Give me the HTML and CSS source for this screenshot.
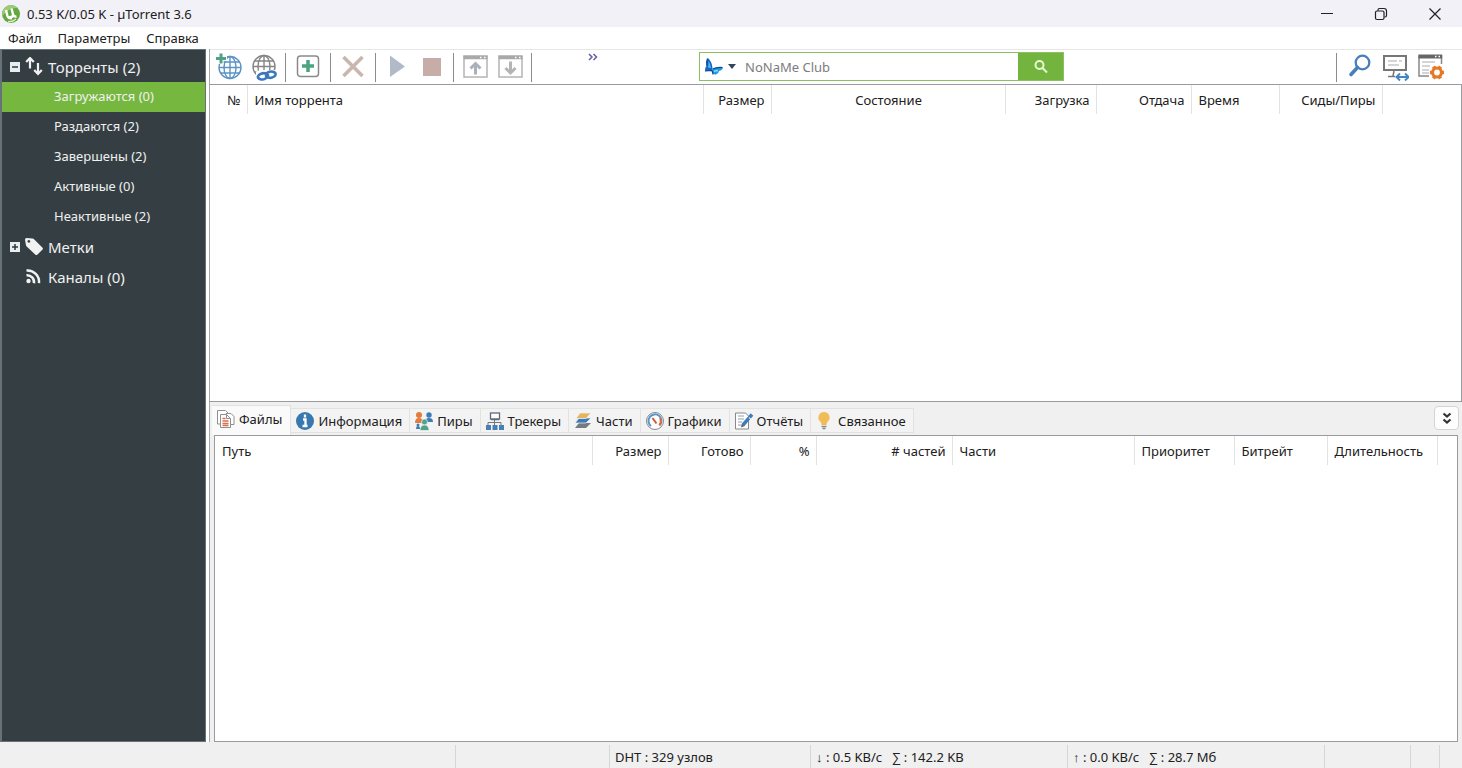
FILE: index.html
```
<!DOCTYPE html>
<html lang="ru">
<head>
<meta charset="utf-8">
<title>0.53 K/0.05 K - µTorrent 3.6</title>
<link rel="stylesheet" href="styles.css">
</head>
<body>
<header class="titlebar">
  <svg class="app-logo" viewBox="0 0 20 20" width="20" height="20"><circle cx="10" cy="10" r="9" fill="#62a83c"/><path d="M1.500 12A9 9 0 0 1 17 4q-9-1-15.500 8z" fill="#9ccb78"/><path d="M5 6l1.300 5.500q1 3.500 4.700 2.700M10.500 4.500l1.700 6.500q.8 2 3.300 1.300M7 12.800q4 1.500 5.300-1.800" fill="none" stroke="#fff" stroke-width="2.400"/><path d="M7 17.500q5 .5 8-2.500" fill="none" stroke="#d9efc8" stroke-width="1.300"/></svg>
  <h1 class="title">0.53 K/0.05 K - µTorrent 3.6</h1>
  <div class="window-buttons">
    <button class="window-button" aria-label="Свернуть"><svg viewBox="0 0 14 14" width="14" height="14"><path d="M1 6.500h12" stroke="#222"/></svg></button>
    <button class="window-button" aria-label="Восстановить"><svg viewBox="0 0 14 14" width="14" height="14" fill="none" stroke="#222" stroke-width="1.200"><rect x="1.500" y="4" width="8.500" height="8.500" rx="1.500"/><path d="M4 3.700V3q0-1.500 1.500-1.500H10Q12.500 1.500 12.500 4v4.500q0 1.500-1.500 1.500h-.5"/></svg></button>
    <button class="window-button" aria-label="Закрыть"><svg viewBox="0 0 14 14" width="14" height="14"><path d="M1.500 1.500l11 11M12.500 1.500l-11 11" stroke="#222" stroke-width="1.200"/></svg></button>
  </div>
</header>
<nav class="menubar">
  <button class="menu-item">Файл</button>
  <button class="menu-item">Параметры</button>
  <button class="menu-item">Справка</button>
</nav>
<div class="workspace">
  <nav class="sidebar">
    <div class="branch">
      <button class="expander" aria-label="Свернуть ветку"><svg viewBox="0 0 10 10" width="10" height="10"><rect width="10" height="10" fill="#e8edf0"/><path d="M2 5h6" stroke="#2c3a44" stroke-width="1.500"/></svg></button>
      <a class="branch-link" href="#torrents"><svg viewBox="0 0 18 20" width="18" height="20" fill="none" stroke="#f2f2f2" stroke-width="2.200"><path d="M5 11.500V2M1.200 5L5 1l3.800 4M13 6v10M9.200 13l3.800 4 3.800-4"/></svg>Торренты (2)</a>
    </div>
    <a class="leaf leaf-active" href="#downloading">Загружаются (0)</a>
    <a class="leaf" href="#seeding">Раздаются (2)</a>
    <a class="leaf" href="#completed">Завершены (2)</a>
    <a class="leaf" href="#active">Активные (0)</a>
    <a class="leaf" href="#inactive">Неактивные (2)</a>
    <div class="branch">
      <button class="expander" aria-label="Развернуть ветку"><svg viewBox="0 0 10 10" width="10" height="10"><rect width="10" height="10" fill="#e8edf0"/><path d="M2 5h6M5 2v6" stroke="#2c3a44" stroke-width="1.500"/></svg></button>
      <a class="branch-link" href="#labels"><svg viewBox="0 0 18 20" width="18" height="20"><path fill-rule="evenodd" d="M0 2.500Q0 1 1.500 1l6 .5q1 .1 1.800 1l8 8q1.200 1.200 0 2.300l-4.800 4.700q-1.200 1-2.300 0l-8.500-8q-.7-.7-.8-1.700zM3.800 3a1.400 1.400 0 1 0 .1 0z" fill="#f2f2f2"/></svg>Метки</a>
    </div>
    <div class="branch">
      <span class="expander"></span>
      <a class="branch-link" href="#feeds"><svg viewBox="0 0 18 20" width="18" height="20" fill="none" stroke="#f2f2f2" stroke-width="2.500"><circle cx="3.500" cy="14" r="2.200" fill="#f2f2f2" stroke="none"/><path d="M1.500 8.200a7 7 0 0 1 7.500 8M1.500 3.500a11.500 11.500 0 0 1 12.500 12.700"/></svg>Каналы (0)</a>
    </div>
  </nav>
  <main class="content">
    <div class="toolbar">
      <div class="tools">
        <button class="tool" aria-label="Добавить торрент"><svg viewBox="0 0 28 28" width="28" height="28" fill="none"><g stroke="#5b93c6" stroke-width="1.400"><circle cx="15" cy="14.500" r="11"/><ellipse cx="15" cy="14.500" rx="6" ry="11"/><path d="M15 4v21M4 14.500h22M6 9h18M6 20h18"/></g><path d="M6 0v11M0 5.500h12" stroke="#fff" stroke-width="5"/><path d="M6 .5v10M1 5.500h10" stroke="#53a184" stroke-width="3"/></svg></button>
        <button class="tool" aria-label="Добавить по ссылке"><svg viewBox="0 0 28 28" width="28" height="28" fill="none"><g stroke="#858585" stroke-width="1.400"><circle cx="14" cy="13.500" r="11"/><ellipse cx="14" cy="13.500" rx="6" ry="11"/><path d="M14 3v22M3 13.500h22M5 8h18M5 19h8"/></g><path d="M6 18.500l4-1.500h17v11H6z" fill="#fff"/><g stroke="#3978bd" stroke-width="2.600" stroke-linecap="round"><path d="M18 24l-2.500 1.500q-2.500 1.500-5 .8-3-1-2.500-3 .5-1.500 3-2.500 3-1.300 5.500 0l1.500 1.200"/><path d="M16 20.500l2-1.200q2.500-1.300 5-.5 3 1 2.500 3-.5 1.700-3 2.600-2.500 1-4.500 0l-2-1.500"/></g></svg></button>
        <span class="divider"></span>
        <button class="tool tool-wide" aria-label="Создать торрент"><svg viewBox="0 0 28 28" width="28" height="28" fill="none"><rect x="3.500" y="3" width="21" height="20.500" rx="3" stroke="#8a8a8a" stroke-width="1.500"/><path d="M14 7v12M8 13h12" stroke="#4aa47f" stroke-width="3.500"/></svg></button>
        <span class="divider"></span>
        <button class="tool tool-wide" aria-label="Удалить"><svg viewBox="0 0 28 28" width="28" height="28"><path d="M4.500 4l19 19M23.500 4l-19 19" stroke="#c9b6ae" stroke-width="3.600"/></svg></button>
        <span class="divider"></span>
        <button class="tool" aria-label="Запустить"><svg viewBox="0 0 28 28" width="28" height="28"><path d="M7 2.500l15 11L7 24z" fill="#b2bac8"/></svg></button>
        <button class="tool" aria-label="Остановить"><svg viewBox="0 0 28 28" width="28" height="28"><rect x="5" y="5" width="18" height="18" fill="#c8aca8"/></svg></button>
        <span class="divider"></span>
        <button class="tool" aria-label="Выше в очереди"><svg viewBox="0 0 28 28" width="28" height="28"><rect x="3" y="3" width="23" height="21" fill="none" stroke="#b4b4b4" stroke-width="1.500"/><path d="M2.500 4.500h24" stroke="#a9a9a9" stroke-width="3.500"/><path d="M19 4.500h1.500M23 4.500h1.500" stroke="#fff" stroke-width="1.500"/><path d="M14.500 21.500V11M9.500 15.500l5-5 5 5" fill="none" stroke="#aab1bb" stroke-width="3"/></svg></button>
        <button class="tool" aria-label="Ниже в очереди"><svg viewBox="0 0 28 28" width="28" height="28"><rect x="3" y="3" width="23" height="21" fill="none" stroke="#b4b4b4" stroke-width="1.500"/><path d="M2.500 4.500h24" stroke="#a9a9a9" stroke-width="3.500"/><path d="M19 4.500h1.500M23 4.500h1.500" stroke="#fff" stroke-width="1.500"/><path d="M14.500 8.500v11M9.500 15l5 5 5-5" fill="none" stroke="#b4b4b4" stroke-width="3"/></svg></button>
        <span class="divider"></span>
      </div>
      <button class="overflow" aria-label="Ещё"><svg viewBox="0 0 10 8" width="10" height="8"><path d="M1 1l3 3-3 3M5.500 1l3 3-3 3" fill="none" stroke="#6060a4" stroke-width="1.500"/></svg></button>
      <form class="search">
        <button class="engine" type="button" aria-label="Поисковая система"><svg viewBox="0 0 20 20" width="20" height="20"><path d="M4 1q4 4 4.500 10l-1 2.500L1 14q-.5-3 1.500-5Q1.500 5 4 1z" fill="#1668c8"/><path d="M4.500 4q2 3 2.500 7l-3-.5q.8-3 .5-6.500z" fill="#4fc0f2"/><path d="M7.500 13q2.500-3 11.500-2.500-.5 2.500-4 3.500-.5 3-3 3.500-3 .5-3.500-2z" fill="#1b9be0"/><path d="M3.500 1.500Q2 5 3 9M8.500 12q4-2 10-1.500M1 14l7-.7M8 13.500l1.200 4" fill="none" stroke="#0b4499" stroke-width="1.200"/><path d="M10 14.500q2-1 4-1" stroke="#7fdcf8" stroke-width="1.500" fill="none"/></svg><svg viewBox="0 0 8 5" width="8" height="5"><path d="M0 0h8L4 5z" fill="#34455c"/></svg></button>
        <input class="search-input" type="text" placeholder="NoNaMe Club" aria-label="Поиск">
        <button class="search-go" type="button" aria-label="Найти"><svg viewBox="0 0 16 16" width="16" height="16" fill="none" stroke="#e6fad4" stroke-width="2"><circle cx="6.500" cy="6" r="4"/><path d="M9.500 9L14 13.500"/></svg></button>
      </form>
      <div class="tools tools-right">
        <span class="divider"></span>
        <button class="tool" aria-label="Поиск торрентов"><svg viewBox="0 0 28 28" width="28" height="28" fill="none" stroke="#477fbd"><circle cx="17.500" cy="9.500" r="6.800" stroke-width="2.300"/><path d="M12.500 14.500L6 21.500" stroke-width="3.600" stroke-linecap="round"/></svg></button>
        <button class="tool" aria-label="Удалённый доступ"><svg viewBox="0 0 28 28" width="28" height="28" fill="none"><rect x="3" y="3" width="22" height="14" stroke="#777" stroke-width="2"/><path d="M7 8h9M18 8h3M7 12h11" stroke="#aaa"/><path d="M13 18l-1 5M7 23.500h7" stroke="#777" stroke-width="1.500"/><path d="M16 24h11M19 20.500L15.500 24l3.500 3.500M24 20.500l3.500 3.500-3.500 3.500" stroke="#4685c4" stroke-width="2"/></svg></button>
        <button class="tool" aria-label="Настройки"><svg viewBox="0 0 28 28" width="28" height="28" fill="none"><path d="M24.500 11V3H2v20h10" stroke="#888" stroke-width="1.500"/><path d="M1.500 3.500h23.700" stroke="#666" stroke-width="4"/><path d="M18 3.500h1.500M21.500 3.500H23" stroke="#fff" stroke-width="1.500"/><path d="M5 9h13M5 13h8M5 17h7M5 20h7" stroke="#aaa"/><circle cx="20" cy="19.500" r="4.400" stroke="#e67824" stroke-width="3"/><path d="M13 19.500h2M25 19.500h2M16.500 13.500l1 1.700M22.500 23.800l1 1.700M16.500 25.500l1-1.700M22.500 15.200l1-1.700" stroke="#e67824" stroke-width="3.600"/></svg></button>
      </div>
    </div>
    <section class="torrents">
      <table class="grid">
        <colgroup><col class="w-37"><col class="w-456"><col class="w-68"><col class="w-234"><col class="w-91"><col class="w-95"><col class="w-88"><col class="w-103"><col></colgroup>
        <thead><tr><th class="right">№</th><th>Имя торрента</th><th class="right">Размер</th><th class="center">Состояние</th><th class="right">Загрузка</th><th class="right">Отдача</th><th>Время</th><th class="right">Сиды/Пиры</th><td></td></tr></thead>
      </table>
    </section>
    <div class="tabbar">
      <div class="tabs" role="tablist">
        <button class="tab tab-active" role="tab" aria-selected="true"><svg viewBox="0 0 20 20" width="20" height="20" fill="#fff" stroke="#909090"><path d="M1.500 15V1.500h8L12 4v11z"/><path d="M10 4.500h5l3 3v8h-8z"/><path d="M4.500 18.500v-13h6l4 4v9z"/><path d="M10.500 5.500v4h4" fill="none"/><path d="M6.500 9.500h3M6.500 12h6M6.500 14.500h6M6.500 16.500h6" stroke="#df6c4b" stroke-width="1.400"/></svg>Файлы</button>
        <button class="tab" role="tab"><svg viewBox="0 0 20 20" width="20" height="20"><circle cx="10" cy="10" r="9" fill="#3978ae"/><path d="M10 3.500v3M8 8.500h2.500v6M7.500 15h5" fill="none" stroke="#fff" stroke-width="2.300"/></svg>Информация</button>
        <button class="tab" role="tab"><svg viewBox="0 0 20 20" width="20" height="20"><g fill="#e37b3e"><circle cx="5" cy="4" r="3"/><path d="M1 12q0-5 4-5t4 5z"/></g><g fill="#3e7cb4"><circle cx="15" cy="4" r="2.700"/><path d="M11 11q0-4 4-4t4 4z"/></g><g fill="#4fa28b" stroke="#f2f2f2" stroke-width=".7"><circle cx="10.500" cy="11" r="3"/><path d="M6 19.500Q6 14 10.500 14t4.500 5.500z"/></g><g fill="#3e7cb4"><circle cx="4" cy="14" r="1.500"/><path d="M2 18q0-3 2-3t2 3z"/></g></svg>Пиры</button>
        <button class="tab" role="tab"><svg viewBox="0 0 20 20" width="20" height="20" fill="none"><path d="M9.500 8v4M3 15v-3.500h13V15M9.500 11v4" stroke="#777"/><rect x="5.500" y="2" width="9" height="6" fill="#fff" stroke="#5e6c7a" stroke-width="1.300"/><path d="M6 8.500h8" stroke="#5e6c7a" stroke-width="1.500"/><path d="M1 14h5v5H1zM7.500 14h5v5h-5zM14 14h5v5h-5z" fill="#4780b4"/></svg>Трекеры</button>
        <button class="tab" role="tab"><svg viewBox="0 0 20 20" width="20" height="20"><path d="M2 17l4-5h12l-5 5z" fill="#747b80"/><path d="M2 12l4-5h12l-5 5z" fill="#397bbd" stroke="#f2f2f2" stroke-width=".7"/><path d="M3 7.500L7 2h11l-5 5.500z" fill="#e8b35c" stroke="#f2f2f2" stroke-width=".7"/></svg>Части</button>
        <button class="tab" role="tab"><svg viewBox="0 0 20 20" width="20" height="20" fill="none"><circle cx="10" cy="10" r="8.500" fill="#fff" stroke="#888"/><path d="M6 15a6.500 6.500 0 1 1 9-1" stroke="#5b96c9" stroke-width="2"/><path d="M15.300 7q1.500 4-1 7.500" stroke="#e2683c" stroke-width="2"/><path d="M7.500 7l4 5.500" stroke="#cf5a3c" stroke-width="2"/></svg>Графики</button>
        <button class="tab" role="tab"><svg viewBox="0 0 20 20" width="20" height="20" fill="none"><path d="M1.500 2h10l3 3v13h-13z" fill="#fff" stroke="#888"/><path d="M4 5h6M4 8h6M4 11h4M4 14h4" stroke="#8aa1b1"/><path d="M9 14L18 3.500" stroke="#3b7dbd" stroke-width="3.500" stroke-dasharray="9 1 5"/><path d="M7 16.500l1-3.500 2.500 2z" fill="#555"/></svg>Отчёты</button>
        <button class="tab" role="tab"><svg viewBox="0 0 20 20" width="20" height="20"><path d="M9 1a5.500 5.500 0 0 0-3.500 9.800Q6.500 12 6.500 14h5q0-2 1-3.200A5.500 5.500 0 0 0 9 1z" fill="#f0bc55"/><path d="M6.500 15.500h5M7.500 17.500h3" stroke="#8c8c8c" stroke-width="1.300"/></svg>Связанное</button>
      </div>
      <button class="collapse" aria-label="Скрыть панель"><svg viewBox="0 0 10 14" width="10" height="14" fill="none" stroke="#333" stroke-width="2.200"><path d="M1.500 2.500L5 5.500l3.500-3M1.500 8.500L5 11.500l3.500-3"/></svg></button>
    </div>
    <section class="details">
      <table class="grid">
        <colgroup><col class="w-377"><col class="w-76"><col class="w-82"><col class="w-66"><col class="w-136"><col class="w-182"><col class="w-100"><col class="w-93"><col class="w-110"><col></colgroup>
        <thead><tr><th>Путь</th><th class="right">Размер</th><th class="right">Готово</th><th class="right">%</th><th class="right"># частей</th><th>Части</th><th>Приоритет</th><th>Битрейт</th><th>Длительность</th><td></td></tr></thead>
      </table>
    </section>
  </main>
</div>
<footer class="statusbar">
  <span class="status status-fill"></span>
  <span class="status status-note"></span>
  <span class="status status-dht">DHT : 329 узлов</span>
  <span class="status status-rate"><span>↓ : 0.5 KB/с</span><span>∑ : 142.2 KB</span></span>
  <span class="status status-rate"><span>↑ : 0.0 KB/с</span><span>∑ : 28.7 Мб</span></span>
  <span class="status status-extra"></span>
  <span class="status status-icon"></span>
  <span class="status status-end"></span>
</footer>
</body>
</html>
```
FILE: styles.css
```
* { box-sizing: border-box; }
html, body { height: 100%; }
body {
  margin: 0;
  display: flex;
  flex-direction: column;
  background: #fff;
  color: #202020;
  font: 13px/18px "Noto Sans", "Open Sans", sans-serif;
}
button, input {
  margin: 0;
  padding: 0;
  border: 0;
  background: none;
  color: inherit;
  font: inherit;
}
svg { flex: none; display: block; }
a { color: inherit; text-decoration: none; }

.titlebar {
  display: flex;
  align-items: center;
  height: 27px;
  background: #f2f1f8;
}
.app-logo { margin: 0 6px 0 1px; }
.title { margin: 0; font-size: 13px; font-weight: 400; }
.window-buttons { display: flex; margin-left: auto; }
.window-button { display: grid; place-items: center; width: 54px; height: 26px; }

.menubar { display: flex; gap: 16px; height: 22px; padding: 0 8px; }

.workspace { display: flex; flex: 1; min-height: 0; }
.sidebar {
  display: flex;
  flex-direction: column;
  width: 206px;
  padding-top: 2px;
  border: 1px solid #667277;
  border-width: 1px 1px 1px 2px;
  background: #353f43;
  color: #f0f0f0;
}
.branch { display: flex; align-items: center; height: 30px; padding-left: 8px; }
.expander { display: grid; place-items: center; width: 10px; height: 10px; }
.branch-link { display: flex; align-items: center; gap: 5px; padding-left: 5px; font-size: 15px; }
.leaf { height: 30px; padding-left: 52px; font-size: 13px; line-height: 28px; }
.leaf-active { background: #76b83f; }

.content {
  display: flex;
  flex: 1;
  flex-direction: column;
  min-width: 0;
  margin-left: 3px;
  border-left: 1px solid #a3a6ab;
  background: #f0f0f0;
}
.toolbar {
  display: flex;
  height: 35px;
  border-top: 1px solid #e6e6e6;
  background: #fff;
}
.tools { display: flex; align-items: center; gap: 7px; padding-left: 5px; }
.tool { display: grid; place-items: center; width: 28px; height: 32px; }
.tool-wide { margin: 0 1px; }
.divider { width: 1px; height: 29px; background: #8c8c8c; }
.overflow { align-self: flex-start; margin-left: 55px; padding: 3px 1px; }
.search { display: flex; width: 365px; height: 29px; margin: 2px auto 0 100px; border: 1px solid #8bc163; }
.engine { display: flex; align-items: center; gap: 4px; padding-left: 4px; }
.search-input { flex: 1; min-width: 0; padding-left: 9px; font-size: 13px; outline: 0; }
.search-input::placeholder { color: #7c7c7c; opacity: 1; }
.search-go { display: grid; place-items: center; width: 45px; background: #72b43e; }
.tools-right { gap: 8px; padding: 0 17px 0 0; }

.torrents, .details { overflow: hidden; border: 1px solid #999ba1; background: #fff; }
.torrents { height: 318px; border-left: 0; }
.details { flex: 1; margin: 0 4px 0 4px; }
.grid { width: 100%; border-collapse: collapse; table-layout: fixed; }
.grid th { height: 29px; padding: 0 6px 0 7px; border-right: 1px solid #e3e3e3; font-weight: 400; text-align: left; white-space: nowrap; }
.grid td { padding: 0; }
.grid .right { text-align: right; }
.grid .center { text-align: center; }
.w-37 { width: 37px; }
.w-456 { width: 456px; }
.w-68 { width: 68px; }
.w-234 { width: 234px; }
.w-91 { width: 91px; }
.w-95 { width: 95px; }
.w-88 { width: 88px; }
.w-103 { width: 103px; }
.w-377 { width: 377px; }
.w-76 { width: 76px; }
.w-82 { width: 82px; }
.w-66 { width: 66px; }
.w-136 { width: 136px; }
.w-182 { width: 182px; }
.w-100 { width: 100px; }
.w-93 { width: 93px; }
.w-110 { width: 110px; }

.tabbar { display: flex; align-items: flex-end; justify-content: space-between; height: 33px; padding: 0 3px 0 2px; }
.tabs { display: flex; align-items: flex-end; }
.tab {
  display: flex;
  align-items: center;
  gap: 3px;
  height: 25px;
  margin-bottom: 2px;
  padding: 0 7px 0 4px;
  border: 1px solid #e2e2e2;
  border-left: 0;
  background: #f3f3f3;
}
.tab-active { height: 30px; margin-bottom: 0; padding-right: 8px; padding-bottom: 3px; background: #fafafa; border-bottom: 0; }
.collapse { display: grid; place-items: center; width: 25px; height: 24px; margin-bottom: 5px; border: 1px solid #d4d4d4; border-radius: 4px; background: #fdfdfd; }

.statusbar { display: flex; height: 26px; padding-top: 3px; background: #f0f0f0; }
.status { display: flex; align-items: center; gap: 10px; padding-left: 5px; border-right: 1px solid #d6d6d6; white-space: nowrap; }
.status-fill { flex: 1; }
.status-note { width: 154px; }
.status-dht { width: 201px; }
.status-rate { width: 257px; }
.status-extra { width: 86px; }
.status-icon { width: 29px; }
.status-end { width: 22px; border-right: 0; }
```
